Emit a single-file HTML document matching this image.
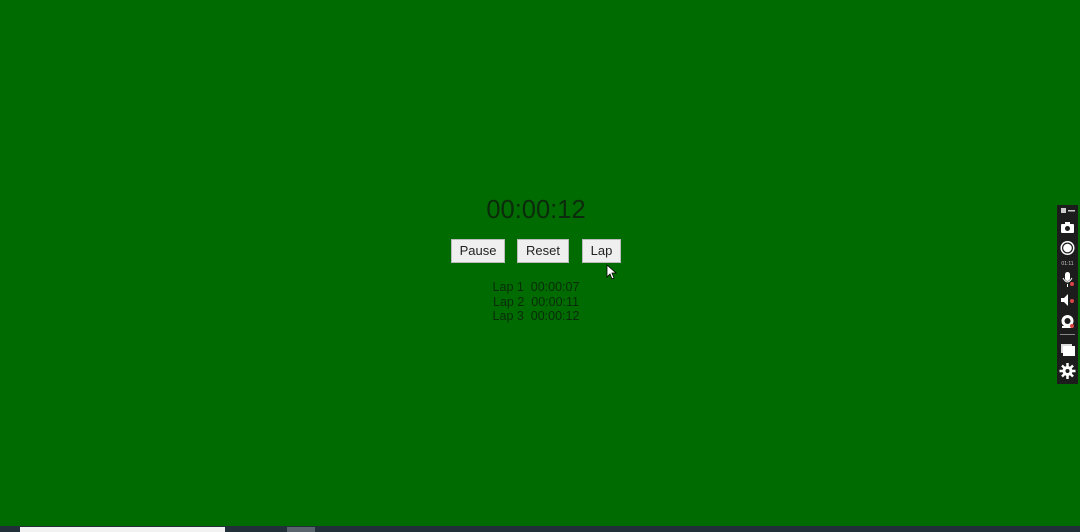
<!DOCTYPE html>
<html><head><style>
html,body{margin:0;padding:0;width:1080px;height:532px;overflow:hidden;background:#006b00;font-family:"Liberation Sans",sans-serif;position:relative}
.t{position:absolute;left:436px;width:200px;top:196px;text-align:center;font-size:25.5px;color:#0c2a0c}
.b{position:absolute;top:239px;height:24px;background:#efefef;border:1px solid #bbb;box-sizing:border-box;font-size:13px;color:#222;text-align:center;line-height:22px}
.laps{position:absolute;left:436px;width:200px;top:280px;text-align:center;font-size:12.5px;line-height:14.5px;color:#0a2c0a}
.bar{position:absolute;left:1057px;top:205px;width:21px;height:179px;background:#1c1c1c}
.tb{position:absolute;left:0;top:526px;width:1080px;height:6px;background:#22303a}
</style></head><body>
<div class="t">00:00:12</div>
<div class="b" style="left:451px;width:54px">Pause</div>
<div class="b" style="left:517px;width:52px">Reset</div>
<div class="b" style="left:582px;width:39px">Lap</div>
<svg style="position:absolute;left:606px;top:264px" width="12" height="16" viewBox="0 0 12 16"><path d="M1 1 L1 13 L4 10 L6 15 L8 14 L6 9 L10 9 Z" fill="#fff" stroke="#000" stroke-width="0.8"/></svg>
<div class="laps">Lap 1&nbsp; 00:00:07<br>Lap 2&nbsp; 00:00:11<br>Lap 3&nbsp; 00:00:12</div>
<div class="bar">
<svg width="21" height="179" viewBox="0 0 21 179">
<rect x="4" y="3" width="5" height="5" fill="#ccc"/><rect x="11" y="5" width="7" height="1.5" fill="#ccc"/>
<rect x="4" y="19" width="13" height="9" rx="1" fill="#fff"/><rect x="8" y="17" width="5" height="3" fill="#fff"/><circle cx="10.5" cy="23.5" r="2.5" fill="#1c1c1c"/>
<circle cx="10.5" cy="43" r="7" fill="#fff"/><circle cx="10.5" cy="43" r="5.5" fill="#1c1c1c"/><circle cx="10.5" cy="43" r="4.3" fill="#fff"/>
<text x="10.5" y="60" font-size="5" fill="#ccc" text-anchor="middle" font-family="Liberation Sans">01:11</text>
<rect x="8" y="67" width="5" height="9" rx="2.5" fill="#fff"/><path d="M6 73 Q10.5 81 15 73 M10.5 79 V82" stroke="#fff" fill="none"/><circle cx="15" cy="79" r="2" fill="#d44"/>
<path d="M4 93 H7 L11 89 V101 L7 97 H4 Z" fill="#fff"/><circle cx="15" cy="96" r="2" fill="#d44"/>
<circle cx="10.5" cy="116" r="6" fill="#fff"/><circle cx="10.5" cy="116" r="3" fill="#1c1c1c"/><rect x="5" y="121" width="11" height="2" fill="#fff"/><circle cx="15" cy="121" r="2" fill="#d44"/>
<rect x="3" y="129" width="15" height="1" fill="#888"/>
<rect x="4" y="139" width="11" height="9" fill="#ddd"/><rect x="6" y="141" width="12" height="10" fill="#fff"/>
<circle cx="10.5" cy="166" r="5" fill="#fff"/><circle cx="10.5" cy="166" r="2" fill="#1c1c1c"/>
<path d="M10.5 158 V174 M2.5 166 H18.5 M5 160.5 L16 171.5 M16 160.5 L5 171.5" stroke="#fff" stroke-width="2.5"/><circle cx="10.5" cy="166" r="2" fill="#1c1c1c"/>
</svg></div>
<div class="tb"></div>
<div style="position:absolute;left:20px;top:527px;width:205px;height:5px;background:#f2f2f2"></div>
<div style="position:absolute;left:287px;top:527px;width:28px;height:5px;background:#5a646c"></div>
</body></html>
